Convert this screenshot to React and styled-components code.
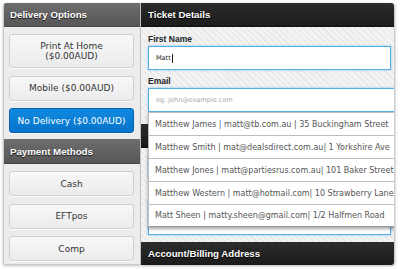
import styled, { createGlobalStyle } from 'styled-components';

const GlobalStyle = createGlobalStyle`
  html, body {
    margin: 0;
    padding: 0;
    background: #fff;
  }
  body {
    font-family: "Liberation Sans", Arial, sans-serif;
  }
`;

const deliveryOptions = [
  { label: 'Print At Home\n($0.00AUD)', tall: true },
  { label: 'Mobile ($0.00AUD)' },
  { label: 'No Delivery ($0.00AUD)', active: true },
];

const paymentMethods = ['Cash', 'EFTpos', 'Comp'];

const suggestions = [
  'Matthew James | matt@tb.com.au | 35 Buckingham Street',
  'Matthew Smith | mat@dealsdirect.com.au| 1 Yorkshire Ave',
  'Matthew Jones | matt@partiesrus.com.au| 101 Baker Street',
  'Matthew Western | matt@hotmail.com| 10 Strawberry Lane',
  'Matt Sheen | matty.sheen@gmail.com| 1/2 Halfmen Road',
];

export default function App() {
  return (
    <>
      <GlobalStyle />
      <Page>
        <Sidebar>
          <SideHeader>Delivery Options</SideHeader>
          <ButtonGroup $bottom={6}>
            {deliveryOptions.map((o) => (
              <OptionButton key={o.label} $tall={o.tall} $active={o.active}>
                {o.label}
              </OptionButton>
            ))}
          </ButtonGroup>
          <SideHeader $tall>Payment Methods</SideHeader>
          <ButtonGroup $bottom={3}>
            {paymentMethods.map((m) => (
              <OptionButton key={m}>{m}</OptionButton>
            ))}
          </ButtonGroup>
        </Sidebar>

        <Main>
          <DarkHeader>Ticket Details</DarkHeader>
          <Section $top={7} $bottom={12}>
            <Label>First Name</Label>
            <Input $focused>
              Matt<Caret />
            </Input>
            <Label $top={6}>Email</Label>
            <Input $focused $wide>
              <Placeholder>eg. john@example.com</Placeholder>
            </Input>
          </Section>

          {/* delivery details block, covered by the open suggestion list */}
          <DarkHeader />
          <Section $top={0} $bottom={7}>
            <Input $focused $top={7} />
            <Input $focused $top={20} $height={36} />
          </Section>

          <DarkHeader>Account/Billing Address</DarkHeader>

          <Suggestions>
            {suggestions.map((s) => (
              <Suggestion key={s}>{s}</Suggestion>
            ))}
          </Suggestions>
        </Main>
      </Page>
    </>
  );
}

const Page = styled.div`
  display: flex;
  align-items: flex-start;
  width: 400px;
  height: 269px;
  padding: 3px 0 0 3px;
  box-sizing: border-box;
  overflow: hidden;
`;

const Sidebar = styled.div`
  width: 138px;
  height: 262px;
  box-sizing: border-box;
  display: flex;
  flex-direction: column;
  background: #ececec;
  border: 1px solid #c9c9c9;
  border-top: none;
  border-radius: 3px 0 0 3px;
  box-shadow: 0 1px 3px rgba(0, 0, 0, 0.25);
  overflow: hidden;
`;

const SideHeader = styled.div`
  height: ${(p) => (p.$tall ? 26 : 25)}px;
  display: flex;
  align-items: center;
  padding-left: 6px;
  background: linear-gradient(#6e6e6e, #565656);
  border-bottom: 1px solid #474747;
  box-sizing: border-box;
  color: #fff;
  font-weight: bold;
  font-size: 9.7px;
  text-shadow: 0 1px 1px rgba(0, 0, 0, 0.8);
`;

const ButtonGroup = styled.div`
  display: flex;
  flex-direction: column;
  gap: 7.5px;
  padding: 7px 6px ${(p) => p.$bottom}px 5px;
`;

const OptionButton = styled.div`
  height: ${(p) => (p.$tall ? 34 : 25)}px;
  box-sizing: border-box;
  display: flex;
  align-items: center;
  justify-content: center;
  text-align: center;
  white-space: pre-line;
  font-family: "DejaVu Sans", sans-serif;
  font-size: 9px;
  line-height: 10px;
  border-radius: 3px;
  color: ${(p) => (p.$active ? '#fff' : '#333')};
  background: ${(p) =>
    p.$active
      ? 'linear-gradient(#1189e0, #0574cc)'
      : 'linear-gradient(#f8f8f8, #ebebeb)'};
  border: 1px solid ${(p) => (p.$active ? '#0a64ad' : '#cfcfcf')};
  box-shadow: 0 1px 0 rgba(255, 255, 255, 0.8);
`;

const Main = styled.div`
  position: relative;
  width: 253px;
  height: 262px;
  display: flex;
  flex-direction: column;
  background-color: #f1f1f1;
  background-image: repeating-linear-gradient(
    45deg,
    #f3f3f3 0 3px,
    #e9e9e9 3px 4.5px
  );
  box-shadow: 1px 1px 3px rgba(0, 0, 0, 0.3);
  border-radius: 0 3px 3px 0;
  overflow: hidden;
`;

const DarkHeader = styled.div`
  height: 24px;
  flex-shrink: 0;
  display: flex;
  align-items: center;
  padding-left: 7px;
  background: linear-gradient(#2c2c2c, #1b1b1b);
  border-bottom: 1px solid #111;
  box-sizing: border-box;
  color: #fff;
  font-weight: bold;
  font-size: 9.7px;
  text-shadow: 0 1px 1px #000;
`;

const Section = styled.div`
  display: flex;
  flex-direction: column;
  padding: ${(p) => p.$top}px 3px ${(p) => p.$bottom}px 7px;
`;

const Label = styled.div`
  margin-top: ${(p) => p.$top || 0}px;
  height: 10px;
  display: flex;
  align-items: center;
  font-weight: bold;
  font-size: 8.5px;
  color: #222;
  margin-bottom: 2px;
`;

const Input = styled.div`
  margin-top: ${(p) => p.$top || 0}px;
  height: ${(p) => p.$height || 24}px;
  width: ${(p) => (p.$wide ? '260px' : 'auto')};
  flex-shrink: 0;
  box-sizing: border-box;
  display: flex;
  align-items: center;
  padding-left: 7px;
  background: #fff;
  border: 1px solid ${(p) => (p.$focused ? '#56aee8' : '#c6c6c6')};
  box-shadow: ${(p) => (p.$focused ? '0 0 2px rgba(86, 174, 232, 0.7)' : 'none')};
  font-family: "DejaVu Sans", sans-serif;
  font-size: 6.5px;
  color: #222;
`;

const Caret = styled.span`
  display: inline-block;
  width: 1px;
  height: 9px;
  margin-left: 1px;
  background: #222;
`;

const Placeholder = styled.span`
  color: #a8a8a8;
`;

const Suggestions = styled.div`
  position: absolute;
  top: 109px;
  left: 7px;
  width: 262px;
  background: #fff;
  box-shadow: 0 2px 3px rgba(0, 0, 0, 0.35);
  border-left: 1px solid #bdbdbd;
`;

const Suggestion = styled.div`
  height: 23px;
  box-sizing: border-box;
  display: flex;
  align-items: center;
  padding-left: 6px;
  white-space: nowrap;
  border-top: 1px solid #bdbdbd;
  font-family: "DejaVu Sans", sans-serif;
  font-size: 8px;
  color: #555;

  &:last-child {
    border-bottom: 1px solid #9a9a9a;
  }
`;
